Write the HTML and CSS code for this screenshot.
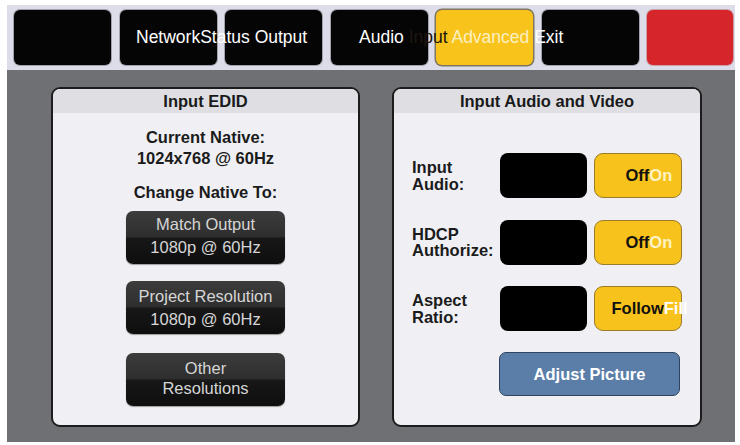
FILE: index.html
```html
<!DOCTYPE html>
<html lang="en">
<head>
<meta charset="utf-8">
<title>Input Advanced</title>
<link rel="stylesheet" href="styles.css">
</head>
<body>
<div class="screen">
  <nav class="topbar">
    <div class="tab"></div>
    <div class="tab"><span class="tab-label tab-label-net">NetworkStatus Output</span></div>
    <div class="tab"></div>
    <div class="tab"><span class="tab-label tab-label-audio">Audio <span class="t-dark">Input</span> <span class="t-cream">Advanced</span> Exit</span></div>
    <div class="tab tab-yellow"></div>
    <div class="tab"></div>
    <div class="tab tab-red"></div>
  </nav>
  <main class="main">
    <section class="panel panel-left">
      <div class="panel-head">Input EDID</div>
      <div class="edid">
        <div class="info">Current Native:<br>1024x768 @ 60Hz</div>
        <div class="info info-change">Change Native To:</div>
        <div class="res-btn res-first"><span>Match Output</span><span>1080p @ 60Hz</span></div>
        <div class="res-btn res-second"><span>Project Resolution</span><span>1080p @ 60Hz</span></div>
        <div class="res-btn res-third"><span>Other</span><span>Resolutions</span></div>
      </div>
    </section>
    <section class="panel panel-right">
      <div class="panel-head">Input Audio and Video</div>
      <div class="av">
        <div class="av-row">
          <div class="av-label">Input<br>Audio:</div>
          <div class="swatch"></div>
          <div class="toggle">Off<span class="t-on">On</span></div>
        </div>
        <div class="av-row">
          <div class="av-label">HDCP<br>Authorize:</div>
          <div class="swatch"></div>
          <div class="toggle">Off<span class="t-on">On</span></div>
        </div>
        <div class="av-row">
          <div class="av-label">Aspect<br>Ratio:</div>
          <div class="swatch"></div>
          <div class="toggle toggle-follow">Follow<span class="t-fill">Fill</span></div>
        </div>
        <div class="adjust">Adjust Picture</div>
      </div>
    </section>
  </main>
</div>
</body>
</html>
```

FILE: styles.css
```css
body {
  margin: 0;
  background: #ffffff;
  font-family: "Liberation Sans", Arial, sans-serif;
}

.screen {
  margin: 5px 0 0 7px;
  width: 728px;
}

/* ---------- top tab bar ---------- */
.topbar {
  height: 65px;
  box-sizing: border-box;
  padding: 5px 2px 5px 7px;
  background: #dcdde9;
  display: flex;
  gap: 8.5px;
}

.tab {
  flex: none;
  width: 97px;
  height: 55px;
  border-radius: 6px;
  background: #050505;
  display: flex;
  align-items: center;
  box-shadow: 0 0 0 1px #a2a2ae;
}

.tab-yellow {
  background: #f8c31a;
  box-shadow: 0 0 0 1.5px #7f7663;
}

.tab-red {
  width: 86px;
  background: #d6252b;
  box-shadow: 0 0 0 1px #c9a0a8;
}

.tab-label {
  position: relative;
  z-index: 1;
  white-space: nowrap;
  color: #ffffff;
  font-size: 17.5px;
}

.tab-label-net {
  margin-left: 16.5px;
}

.tab-label-audio {
  margin-left: 28.5px;
}

.t-dark {
  color: #1d1610;
}

.t-cream {
  color: #fbf0c2;
}

/* ---------- main area ---------- */
.main {
  background: #6f7074;
  height: 372px;
  box-sizing: border-box;
  padding: 17px 0 0 44px;
  display: flex;
  gap: 32px;
}

.panel {
  height: 340px;
  box-sizing: border-box;
  border: 2px solid #1c1c1c;
  border-radius: 9px;
  background: #f0f0f4;
  overflow: hidden;
  display: flex;
  flex-direction: column;
}

.panel-left {
  width: 309px;
}

.panel-right {
  width: 310px;
}

.panel-head {
  height: 24px;
  line-height: 24px;
  background: #dfdfe3;
  text-align: center;
  font-weight: bold;
  font-size: 16.5px;
  color: #1a1a1a;
}

/* ---------- Input EDID ---------- */
.edid {
  display: flex;
  flex-direction: column;
  align-items: center;
}

.info {
  margin-top: 13.5px;
  text-align: center;
  font-weight: bold;
  font-size: 16.5px;
  line-height: 21px;
  color: #1b1b1b;
}

.info-change {
  margin-top: 13px;
}

.res-btn {
  width: 159px;
  height: 53px;
  border-radius: 7px;
  background: linear-gradient(#3c3c3c, #2e2e2e 48%, #171717 52%, #0e0e0e);
  box-shadow: 0 1px 1px rgba(0, 0, 0, 0.35);
  color: #d6d6d6;
  font-size: 16.5px;
  line-height: 23px;
  display: flex;
  flex-direction: column;
  align-items: center;
  justify-content: center;
}

.res-first {
  margin-top: 8.5px;
  padding-bottom: 3px;
  box-sizing: border-box;
}

.res-second {
  margin-top: 17px;
}

.res-third {
  margin-top: 19px;
  line-height: 20px;
  padding-bottom: 4px;
  box-sizing: border-box;
}

/* ---------- Input Audio and Video ---------- */
.av {
  padding: 40px 0 0 18px;
  display: flex;
  flex-direction: column;
}

.av-row {
  display: flex;
  align-items: center;
  height: 45px;
}

.av-row + .av-row {
  margin-top: 21.5px;
}

.av-label {
  width: 88px;
  font-weight: bold;
  font-size: 16.5px;
  line-height: 16.5px;
  color: #1b1b1b;
}

.swatch {
  width: 87px;
  height: 45px;
  margin-right: 7px;
  border-radius: 8px;
  background: #000000;
}

.toggle {
  width: 88px;
  height: 45px;
  box-sizing: border-box;
  padding-left: 30.5px;
  background: #f7c21b;
  border: 1.5px solid #9a7c2a;
  border-radius: 9px;
  display: flex;
  align-items: center;
  white-space: nowrap;
  font-weight: bold;
  font-size: 16.5px;
  color: #111111;
}

.toggle-follow {
  padding-left: 16.5px;
}

.t-on {
  color: #fdf3c6;
}

.t-fill {
  color: #ffffff;
}

.adjust {
  margin: 21px 0 0 87px;
  width: 181px;
  height: 44px;
  box-sizing: border-box;
  background: #5a7ea8;
  border: 1.5px solid #2f4360;
  border-radius: 7px;
  display: flex;
  align-items: center;
  justify-content: center;
  color: #ffffff;
  font-weight: bold;
  font-size: 16.5px;
}
```
